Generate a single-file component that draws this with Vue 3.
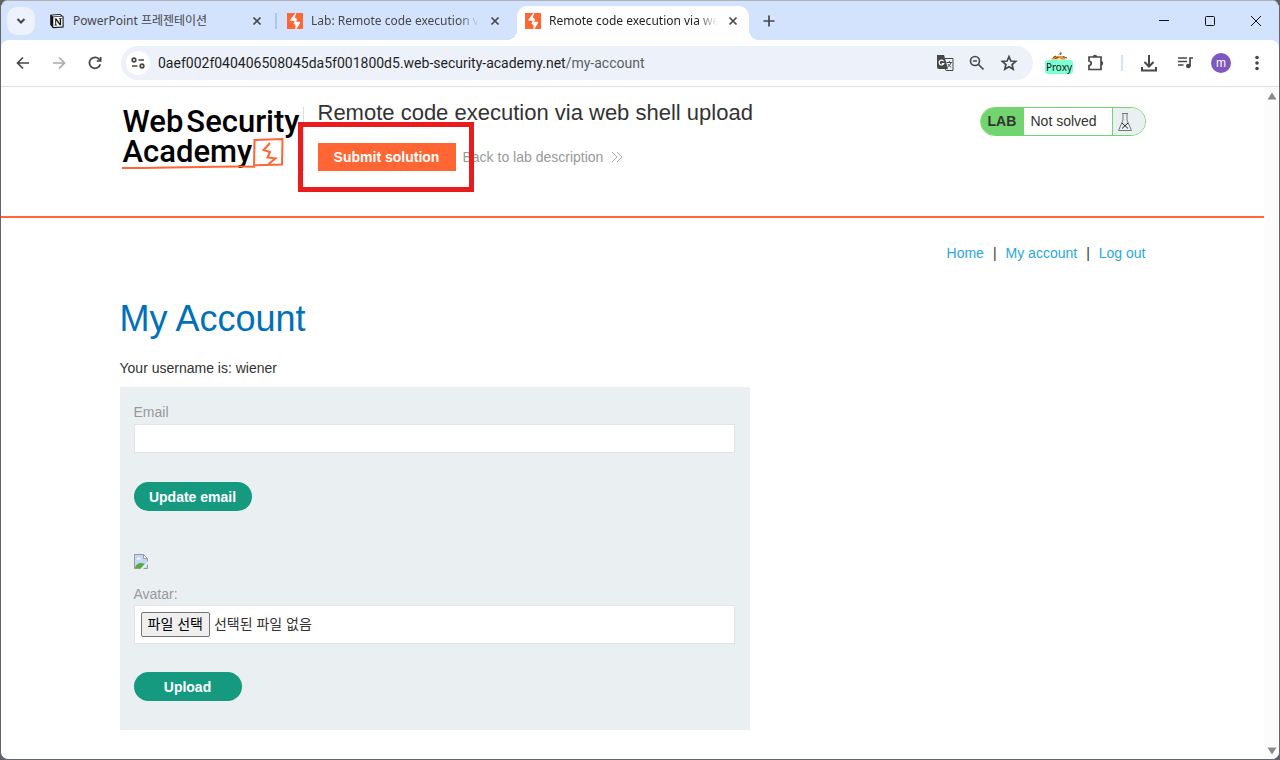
<template>
  <div class="window">
    <header class="tab-strip">
      <button class="tab-search" aria-label="Search tabs">
        <svg width="10" height="10" viewBox="0 0 10 10"><path d="M1.5 3 5 6.5 8.5 3" class="stroke heavy" /></svg>
      </button>
      <div class="tabs">
        <template v-for="(tab, index) in tabs" :key="tab.title">
          <span v-if="index > 0" class="tab-separator" :class="{ visible: index === 1 }"></span>
          <div class="tab" :class="{ active: tab.active }">
            <svg v-if="tab.icon === 'notion'" class="favicon" viewBox="0 0 16 16">
              <path d="M1.2 1.8 11 .9l3.6 2.5v11L4 15.2l-2.8-3.5z" fill="#111" />
              <path d="m4.3 4.2 9.2-.6v9.8l-9.2.7z" fill="#fff" />
              <path d="M2.6 2.5 10.8 2l1.4.9-8.1.5z" fill="#fff" />
              <path d="M5.6 5.6h2l3.1 4.7V6H9.8v-.7h3v.7h-.7v6.3h-1.4L7.2 7.4v4.4h.9v.7H5.5v-.7h.7V6.3h-.6z" fill="#111" />
            </svg>
            <svg v-else class="favicon" viewBox="0 0 16 16">
              <path d="M0 0h16v16H0z" fill="#ff6633" />
              <path d="M8.400 0 3.400 6.400v1.400h4.200L6.400 10.800l2 1.200v4h1l3.600-5.800V8.800H9.200L10 6 7.800 4.600 9.400 0z" fill="#fff" />
            </svg>
            <span class="tab-title" :class="{ faded: tab.faded }">{{ tab.title }}</span>
            <button class="tab-close" aria-label="Close tab">
              <svg width="10" height="10" viewBox="0 0 10 10"><path d="m1.500 1.500 7 7M8.500 1.500l-7 7" class="stroke" /></svg>
            </button>
          </div>
        </template>
      </div>
      <button class="new-tab" aria-label="New tab">
        <svg width="12" height="12" viewBox="0 0 12 12"><path d="M6 .5v11M.5 6h11" class="stroke" /></svg>
      </button>
      <div class="window-controls">
        <button aria-label="Minimize">
          <svg width="12" height="12" viewBox="0 0 12 12"><path d="M1 5.5h10" class="thin" /></svg>
        </button>
        <button aria-label="Maximize">
          <svg width="12" height="12" viewBox="0 0 12 12"><rect x="1.5" y="1.5" width="9" height="9" rx="1" class="thin" /></svg>
        </button>
        <button aria-label="Close">
          <svg width="12" height="12" viewBox="0 0 12 12"><path d="m1 1 10 10M11 1 1 11" class="thin" /></svg>
        </button>
      </div>
    </header>

    <div class="toolbar">
      <div class="history">
        <button class="icon-button" aria-label="Back">
          <svg viewBox="0 0 20 20"><path d="M16 10H4.500M10 4.500 4.500 10l5.500 5.500" class="stroke" /></svg>
        </button>
        <button class="icon-button disabled" aria-label="Forward">
          <svg viewBox="0 0 20 20"><path d="M4 10h11.500M10 4.500l5.500 5.500-5.500 5.500" class="stroke" /></svg>
        </button>
        <button class="icon-button" aria-label="Reload">
          <svg viewBox="0 0 20 20"><path d="M15.300 11.200A5.500 5.500 0 1 1 14 6.100l1.500 1.600M15.700 4v4h-4" class="stroke" /></svg>
        </button>
      </div>

      <div class="omnibox">
        <button class="site-info" aria-label="Site information">
          <svg width="14" height="12" viewBox="0 0 14 12">
            <circle cx="3" cy="3" r="1.800" class="stroke" />
            <path d="M7.500 3H13M1 9h5.500" class="stroke" />
            <circle cx="11" cy="9" r="1.800" class="stroke" />
          </svg>
        </button>
        <div class="url">0aef002f040406508045da5f001800d5.web-security-academy.net<span class="path">/my-account</span></div>
        <button class="icon-button" aria-label="Translate">
          <svg viewBox="0 0 20 20">
            <path d="M2 2h7l4 14H4a2 2 0 0 1-2-2z" fill="#474747" />
            <path d="M10 5.500h8v12h-7l-1-2" class="stroke slim" />
            <path d="M8.600 8.300a2.400 2.400 0 1 0 .1 2.400H6.800" fill="none" stroke="#fff" stroke-width="1.200" />
            <path d="M11.500 9.500H17M14.300 8v1.500M16 9.500c-.4 2-2 3.500-3.500 4.500M13 11c.6 1.500 2 2.500 3.200 3.200" class="stroke slim" />
          </svg>
        </button>
        <button class="icon-button" aria-label="Zoom">
          <svg viewBox="0 0 20 20">
            <circle cx="8" cy="8" r="4.500" class="stroke" />
            <path d="m11.500 11.500 5 5M6 8h4" class="stroke" />
          </svg>
        </button>
        <button class="icon-button" aria-label="Bookmark this tab">
          <svg viewBox="0 0 20 20"><path d="m10 3.600 1.900 4.400 4.800.4-3.600 3.200 1.100 4.700L10 13.800l-4.200 2.500 1.100-4.700-3.600-3.200 4.800-.4z" class="stroke" /></svg>
        </button>
      </div>

      <div class="actions">
        <button class="proxy" aria-label="FoxyProxy">
          <svg width="18" height="8" viewBox="0 0 18 8">
            <path d="M1 7.500C3 4.500 6 3.500 8 4c1-1 1.500-.5 2 .3 2.500-1 5 1 6 3.200z" fill="#f09022" />
            <path d="M3 5.500 6 4M9 2.500l2-2-.3 2.500M5 7c1-1.500 2.500-1.500 4-1M13 4.500l4 1.500" stroke="#444" fill="none" />
            <path d="M7 7.500 9 5.500l2 2z" fill="#fff" />
          </svg>
          <span>Proxy</span>
        </button>
        <button class="icon-button" aria-label="Extensions">
          <svg viewBox="0 0 20 20">
            <path d="M4 4h12v12.500H4v-4c3-.3 3-4 0-4.500z" class="stroke" />
            <path d="M7.800 4a2.200 2.200 0 0 1 4.400 0zM16 8a2.200 2.200 0 0 1 0 4.400z" fill="#474747" />
          </svg>
        </button>
        <span class="divider"></span>
        <button class="icon-button" aria-label="Downloads">
          <svg viewBox="0 0 20 20"><path d="M10 2v11M5.500 9l4.500 4.500L14.500 9M3 14v3.500h14V14" class="stroke heavy" /></svg>
        </button>
        <button class="icon-button" aria-label="Media controls">
          <svg viewBox="0 0 20 20">
            <path d="M3 5h9M3 8.500h9M3 12h5.500M15 13.500V5h3" class="stroke" />
            <circle cx="13.300" cy="13" r="2.300" fill="#474747" />
          </svg>
        </button>
        <button class="profile">m</button>
        <button class="icon-button" aria-label="Menu">
          <svg viewBox="0 0 20 20" fill="#474747">
            <circle cx="10" cy="4.500" r="1.800" /><circle cx="10" cy="10" r="1.800" /><circle cx="10" cy="15.500" r="1.800" />
          </svg>
        </button>
      </div>
    </div>

    <div class="viewport">
      <main class="page">
        <section class="lab-header">
          <div class="container lab-row">
            <a href="#" class="logo">
              <span class="logo-line"><span>Web</span><span>Security</span></span>
              <span class="logo-line">Academy</span>
              <svg class="logo-mark" width="164" height="34" viewBox="0 0 164 34">
                <path d="M1 31c44 .5 88-2 132-1.300L133.500 3l28-1-.5 25.500-27 .7" />
                <path d="m149 6-6.500 7 6.500 2-2.500 5.500 8 1-7 5.500" />
              </svg>
            </a>
            <div class="lab-title">
              <h2>Remote code execution via web shell upload</h2>
              <div class="lab-links">
                <div class="submit-wrap">
                  <button class="submit">Submit solution</button>
                  <span class="highlight"></span>
                </div>
                <a href="#" class="back">
                  Back to lab description
                  <svg width="12" height="12" viewBox="0 0 12 12"><path d="m1 1 5 5-5 5M6 1l5 5-5 5" /></svg>
                </a>
              </div>
            </div>
            <div class="status">
              <span class="status-label">LAB</span>
              <span class="status-text">Not solved</span>
              <span class="status-icon">
                <svg width="16" height="20" viewBox="0 0 16 20">
                  <path d="M5 1.500h6M6 2v6L1.500 18.500h13L10 8V2" stroke="#777" />
                  <path d="m5 11 6 5.500M11 11l-6 5.500" stroke="#222" />
                </svg>
              </span>
            </div>
          </div>
        </section>

        <div class="container">
          <nav class="links">
            <a href="#">Home</a><span>|</span><a href="#">My account</a><span>|</span><a href="#">Log out</a>
          </nav>
          <h1>My Account</h1>
          <p class="username">Your username is: wiener</p>
          <div class="forms">
            <form @submit.prevent>
              <label for="email">Email</label>
              <input id="email" v-model="email" type="email" class="text-input" />
              <button class="green">Update email</button>
            </form>
            <form class="avatar-form" @submit.prevent>
              <svg class="broken" width="14" height="15" viewBox="0 0 14 15">
                <path d="M.5.500h9l4 4v10H.5z" fill="#c3d8f7" stroke="#9a9a9a" />
                <path d="M9.500.500v4h4z" fill="#fff" stroke="#9a9a9a" />
                <path d="M2.500 5.500c0-1.500 1.500-1.500 2-2 1 0 1.500.5 2 1.500v.5z" fill="#fff" />
                <path d="M1 14c1-4 4-5 6-5s3 1 4 1l-4 4z" fill="#57ab3b" />
                <path d="m14 7-7.500 8H9l5-5z" fill="#eaeff2" />
              </svg>
              <label for="avatar">Avatar:</label>
              <div class="file-input">
                <span class="file-button">파일 선택</span>
                <span>{{ fileName }}</span>
                <input id="avatar" type="file" @change="onFile" />
              </div>
              <button class="green upload">Upload</button>
            </form>
          </div>
        </div>
      </main>
      <div class="scrollbar">
        <svg width="10" height="8" viewBox="0 0 10 8"><path d="M5 .5 9.500 7.500H.5z" /></svg>
        <svg width="10" height="8" viewBox="0 0 10 8"><path d="M5 7.500.5.500h9z" /></svg>
      </div>
    </div>
  </div>
</template>

<script setup>
import { ref } from 'vue';

const tabs = [
  { title: 'PowerPoint 프레젠테이션', icon: 'notion' },
  { title: 'Lab: Remote code execution via', icon: 'burp', faded: true },
  { title: 'Remote code execution via web', icon: 'burp', faded: true, active: true },
];

const email = ref('');
const fileName = ref('선택된 파일 없음');

const onFile = (event) => {
  const file = event.target.files[0];
  fileName.value = file ? file.name : '선택된 파일 없음';
};
</script>

<style>
body {
  margin: 0;
  background: #5f6368;
}
</style>

<style scoped>
* {
  box-sizing: border-box;
}

.window {
  display: flex;
  flex-direction: column;
  min-height: 100vh;
  border: 1px solid #63676c;
  border-top-color: #b0b2b5;
  border-radius: 8px;
  overflow: hidden;
  background: #fff;
  color: #333;
  font-family: "Liberation Sans", "Noto Sans CJK KR", sans-serif;
  font-size: 14px;
}

button {
  padding: 0;
  border: 0;
  background: none;
  font-family: inherit;
  cursor: pointer;
}

a {
  text-decoration: none;
}

svg {
  display: block;
  flex: none;
}

.stroke {
  fill: none;
  stroke: #474747;
  stroke-width: 1.7;
}

.stroke.heavy {
  stroke-width: 2;
}

.stroke.slim {
  stroke-width: 1;
}

.thin {
  fill: none;
  stroke: #111;
}

/* tab strip */
.tab-strip {
  position: relative;
  z-index: 1;
  display: flex;
  align-items: center;
  height: 39px;
  padding: 0 0 0 6px;
  background: #d3e2fd;
}

.tab-search {
  display: flex;
  align-items: center;
  justify-content: center;
  width: 28px;
  height: 28px;
  margin-right: 6px;
  border-radius: 10px;
  background: #ecf2fe;
}

.tabs {
  display: flex;
  align-self: stretch;
  align-items: center;
  padding-top: 5px;
}

.tab {
  display: flex;
  align-items: center;
  gap: 8px;
  width: 232px;
  height: 34px;
  padding: 0 8px 5px;
  color: #474747;
}

.tab.active {
  position: relative;
  border-radius: 10px 10px 0 0;
  background: #fff;
  color: #1f1f1f;
}

.tab.active::before,
.tab.active::after {
  content: "";
  position: absolute;
  bottom: 0;
  width: 10px;
  height: 10px;
}

.tab.active::before {
  right: 100%;
  background: radial-gradient(circle at 0 0, transparent 10px, #fff 10px);
}

.tab.active::after {
  left: 100%;
  background: radial-gradient(circle at 100% 0, transparent 10px, #fff 10px);
}

.tab-separator {
  width: 2px;
  height: 16px;
  margin: 0 2px 5px;
}

.tab-separator.visible {
  background: #a8c7fa;
}

.favicon {
  width: 16px;
  height: 16px;
}

.tab-title {
  flex: 1;
  overflow: hidden;
  white-space: nowrap;
  font-family: "Noto Sans", "Noto Sans CJK KR", sans-serif;
  font-size: 12px;
  line-height: 20px;
}

.tab-title.faded {
  mask-image: linear-gradient(to right, #000 88%, transparent);
}

.tab-close,
.new-tab {
  display: flex;
  align-items: center;
  justify-content: center;
  width: 16px;
  height: 16px;
}

.new-tab {
  margin-left: 12px;
}

.window-controls {
  display: flex;
  align-self: stretch;
  margin-left: auto;
}

.window-controls button {
  display: flex;
  align-items: center;
  justify-content: center;
  width: 46px;
}

/* toolbar */
.toolbar {
  display: flex;
  align-items: center;
  height: 47px;
  padding: 0 12px;
  border-bottom: 1px solid #dcdfe3;
  border-radius: 8px 8px 0 0;
  background: #fff;
  box-shadow: 0 -8px 0 #d3e2fd;
}

.icon-button {
  flex: none;
  width: 20px;
  height: 20px;
}

.icon-button svg {
  width: 20px;
  height: 20px;
}

.disabled {
  opacity: 0.45;
}

.history {
  display: flex;
  gap: 16px;
  margin-right: 16px;
}

.omnibox {
  display: flex;
  flex: 1;
  align-items: center;
  gap: 12px;
  min-width: 0;
  height: 34px;
  padding: 0 14px 0 5px;
  border-radius: 17px;
  background: #ecf1fa;
}

.site-info {
  display: flex;
  flex: none;
  align-items: center;
  justify-content: center;
  width: 24px;
  height: 24px;
  border-radius: 12px;
  background: #fff;
}

.url {
  flex: 1;
  margin-left: -4px;
  overflow: hidden;
  white-space: nowrap;
  color: #1f1f1f;
  font-family: Roboto, sans-serif;
  font-size: 14px;
  line-height: 20px;
}

.path {
  color: #5a5e63;
}

.actions {
  display: flex;
  align-items: center;
  gap: 16px;
  margin-left: 12px;
}

.proxy {
  display: flex;
  flex-direction: column;
  align-items: center;
  width: 28px;
  margin-right: -4px;
}

.proxy span {
  width: 28px;
  height: 14px;
  border-radius: 3px;
  background: #7fffd4;
  color: #111;
  font-family: "Noto Sans", sans-serif;
  font-size: 10px;
  line-height: 14px;
}

.divider {
  width: 2px;
  height: 16px;
  background: #d3e2fd;
}

.profile {
  width: 20px;
  height: 20px;
  border-radius: 50%;
  background: #7e57c2;
  color: #fff;
  font-size: 12px;
  line-height: 18px;
}

/* page */
.viewport {
  display: flex;
  flex: 1;
}

.page {
  flex: 1;
  min-width: 0;
}

.scrollbar {
  display: flex;
  flex-direction: column;
  align-items: center;
  justify-content: space-between;
  width: 15px;
  padding: 5px 0 4px;
  background: #fcfcfc;
  fill: #8a8a8a;
}

.container {
  max-width: 1026px;
  margin: 0 auto;
}

.lab-header {
  height: 131px;
  border-bottom: 2px solid #ff6633;
}

.lab-row {
  display: flex;
  align-items: flex-start;
}

.logo {
  position: relative;
  width: 183px;
  height: 84px;
  padding: 20px 0 0 3px;
  color: #000;
  font-family: Roboto, sans-serif;
  font-size: 31px;
  font-weight: 500;
}

.logo-line {
  display: flex;
  gap: 3px;
  line-height: 30px;
}

.logo-mark {
  position: absolute;
  bottom: 0;
  left: 1px;
  fill: none;
  stroke: #ff6633;
  stroke-width: 2;
}

.lab-title {
  flex: 1;
  height: 64px;
  margin-top: 20px;
  padding-left: 14px;
  border-left: 1px solid #ddd;
}

h2 {
  margin: -7px 0 17px;
  font-size: 22px;
  font-weight: 400;
  line-height: 26px;
}

.lab-links {
  display: flex;
  align-items: center;
  gap: 7px;
}

.submit-wrap {
  position: relative;
}

.submit {
  display: block;
  width: 138px;
  height: 28px;
  background: #ff6633;
  color: #fff;
  font-size: 14px;
  font-weight: 700;
}

.highlight {
  position: absolute;
  inset: -21px -18px -21px -20px;
  border: 5px solid #e81c1c;
  pointer-events: none;
  z-index: 1;
}

.back {
  display: flex;
  align-items: center;
  gap: 8px;
  color: #999;
}

.back svg {
  fill: none;
  stroke: #aaa;
}

.status {
  display: flex;
  height: 29px;
  margin-top: 20px;
  border: 1px solid #72d46e;
  border-radius: 15px;
  overflow: hidden;
  line-height: 27px;
}

.status-label {
  width: 43px;
  padding-left: 7px;
  background: #72d46e;
  font-size: 14px;
  font-weight: 700;
}

.status-text {
  width: 89px;
  padding-left: 7px;
  border-right: 1px solid #72d46e;
}

.status-icon {
  width: 32px;
  padding: 4px;
  background: #eaeff2;
  fill: none;
}

.links {
  display: flex;
  justify-content: flex-end;
  gap: 9px;
  padding-top: 25px;
  line-height: 20px;
}

.links a {
  color: #29a7df;
}

h1 {
  margin: 35px 0 17px;
  color: #0070ba;
  font-size: 36px;
  font-weight: 400;
  line-height: 42px;
}

.username {
  margin: 0 0 8px;
  line-height: 22px;
}

.forms {
  max-width: 630px;
  padding: 14px 15px 29px 14px;
  background: #eaeff2;
}

form {
  display: flex;
  flex-direction: column;
  align-items: flex-start;
}

label {
  color: #999;
  line-height: 22px;
}

.text-input {
  width: 100%;
  height: 29px;
  margin: 1px 0 29px;
  padding: 0 6px;
  border: 1px solid #e3e3e3;
  font-size: 14px;
}

.green {
  width: 118px;
  height: 29px;
  border-radius: 15px;
  background: #159a80;
  color: #fff;
  font-size: 14px;
  font-weight: 700;
}

.upload {
  width: 108px;
}

.avatar-form {
  margin-top: 43px;
}

.broken {
  margin-bottom: 14px;
}

.file-input {
  position: relative;
  display: flex;
  align-items: center;
  gap: 4px;
  width: 100%;
  height: 39px;
  margin-bottom: 28px;
  padding: 0 6px;
  border: 1px solid #e3e3e3;
  background: #fff;
  line-height: 23px;
}

.file-button {
  padding: 0 6px;
  border: 1px solid #767676;
  border-radius: 2px;
  background: #efefef;
  color: #000;
}

.file-input input {
  position: absolute;
  inset: 0;
  width: 100%;
  opacity: 0;
}
</style>
